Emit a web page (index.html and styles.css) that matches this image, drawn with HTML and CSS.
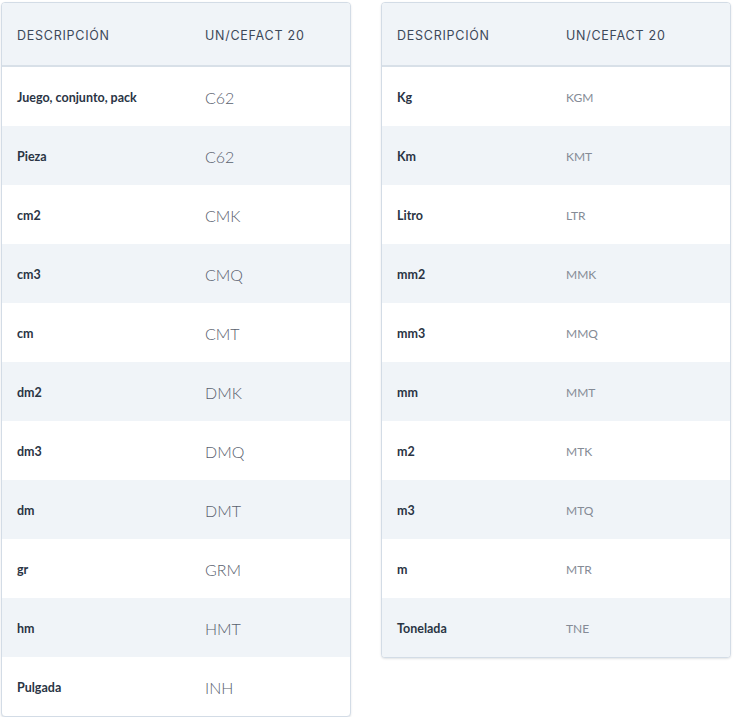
FILE: index.html
```html
<!DOCTYPE html>
<html lang="es">
<head>
<meta charset="utf-8">
<link rel="stylesheet" href="styles.css">
</head>
<body>
<div class="page">
  <div class="card card-left">
    <table class="units">
      <thead>
        <tr><th class="c1">Descripción</th><th>UN/CEFACT 20</th></tr>
      </thead>
      <tbody>
        <tr><td class="desc">Juego, conjunto, pack</td><td class="code">C62</td></tr>
        <tr><td class="desc">Pieza</td><td class="code">C62</td></tr>
        <tr><td class="desc">cm2</td><td class="code">CMK</td></tr>
        <tr><td class="desc">cm3</td><td class="code">CMQ</td></tr>
        <tr><td class="desc">cm</td><td class="code">CMT</td></tr>
        <tr><td class="desc">dm2</td><td class="code">DMK</td></tr>
        <tr><td class="desc">dm3</td><td class="code">DMQ</td></tr>
        <tr><td class="desc">dm</td><td class="code">DMT</td></tr>
        <tr><td class="desc">gr</td><td class="code">GRM</td></tr>
        <tr><td class="desc">hm</td><td class="code">HMT</td></tr>
        <tr><td class="desc">Pulgada</td><td class="code">INH</td></tr>
      </tbody>
    </table>
  </div>
  <div class="card card-right">
    <table class="units">
      <thead>
        <tr><th class="c1">Descripción</th><th>UN/CEFACT 20</th></tr>
      </thead>
      <tbody>
        <tr><td class="desc">Kg</td><td class="code">KGM</td></tr>
        <tr><td class="desc">Km</td><td class="code">KMT</td></tr>
        <tr><td class="desc">Litro</td><td class="code">LTR</td></tr>
        <tr><td class="desc">mm2</td><td class="code">MMK</td></tr>
        <tr><td class="desc">mm3</td><td class="code">MMQ</td></tr>
        <tr><td class="desc">mm</td><td class="code">MMT</td></tr>
        <tr><td class="desc">m2</td><td class="code">MTK</td></tr>
        <tr><td class="desc">m3</td><td class="code">MTQ</td></tr>
        <tr><td class="desc">m</td><td class="code">MTR</td></tr>
        <tr><td class="desc">Tonelada</td><td class="code">TNE</td></tr>
      </tbody>
    </table>
  </div>
</div>
</body>
</html>
```

FILE: styles.css
```css
* { box-sizing: border-box; }

html, body {
  margin: 0;
  padding: 0;
  background: #ffffff;
}

body {
  font-family: "Lato", "Open Sans", sans-serif;
  color: #2d3748;
}

.page {
  display: flex;
  align-items: flex-start;
  gap: 30px;
  padding: 2px 0 0 1px;
}

.card {
  width: 350px;
  border: 1px solid #d3dce6;
  border-radius: 4px;
  overflow: hidden;
  box-shadow: 0 1px 2px rgba(60, 72, 88, 0.15);
  background: #ffffff;
}

.units {
  width: 100%;
  border-collapse: separate;
  border-spacing: 0;
  table-layout: fixed;
}

.units th {
  height: 64px;
  padding: 2px 0 0 15px;
  text-align: left;
  font-family: "Inter", "Lato", sans-serif;
  font-size: 12.5px;
  font-weight: 400;
  text-transform: uppercase;
  letter-spacing: 0.75px;
  color: #3c4858;
  background: #f0f4f8;
  border-bottom: 2px solid #d8e0e8;
}

.card-left .c1 { width: 188px; }
.card-right .c1 { width: 169px; }

.units td {
  height: 59px;
  padding: 2px 0 0 15px;
  vertical-align: middle;
}

.units tbody tr:nth-child(even) td {
  background: #f0f4f8;
}

.desc {
  font-size: 12.5px;
  font-weight: 700;
  color: #2a3444;
}

.card-left .code {
  font-size: 16px;
  font-weight: 300;
  color: #59616e;
}

.card-right .code {
  font-size: 12px;
  font-weight: 400;
  color: #858b96;
}
```
